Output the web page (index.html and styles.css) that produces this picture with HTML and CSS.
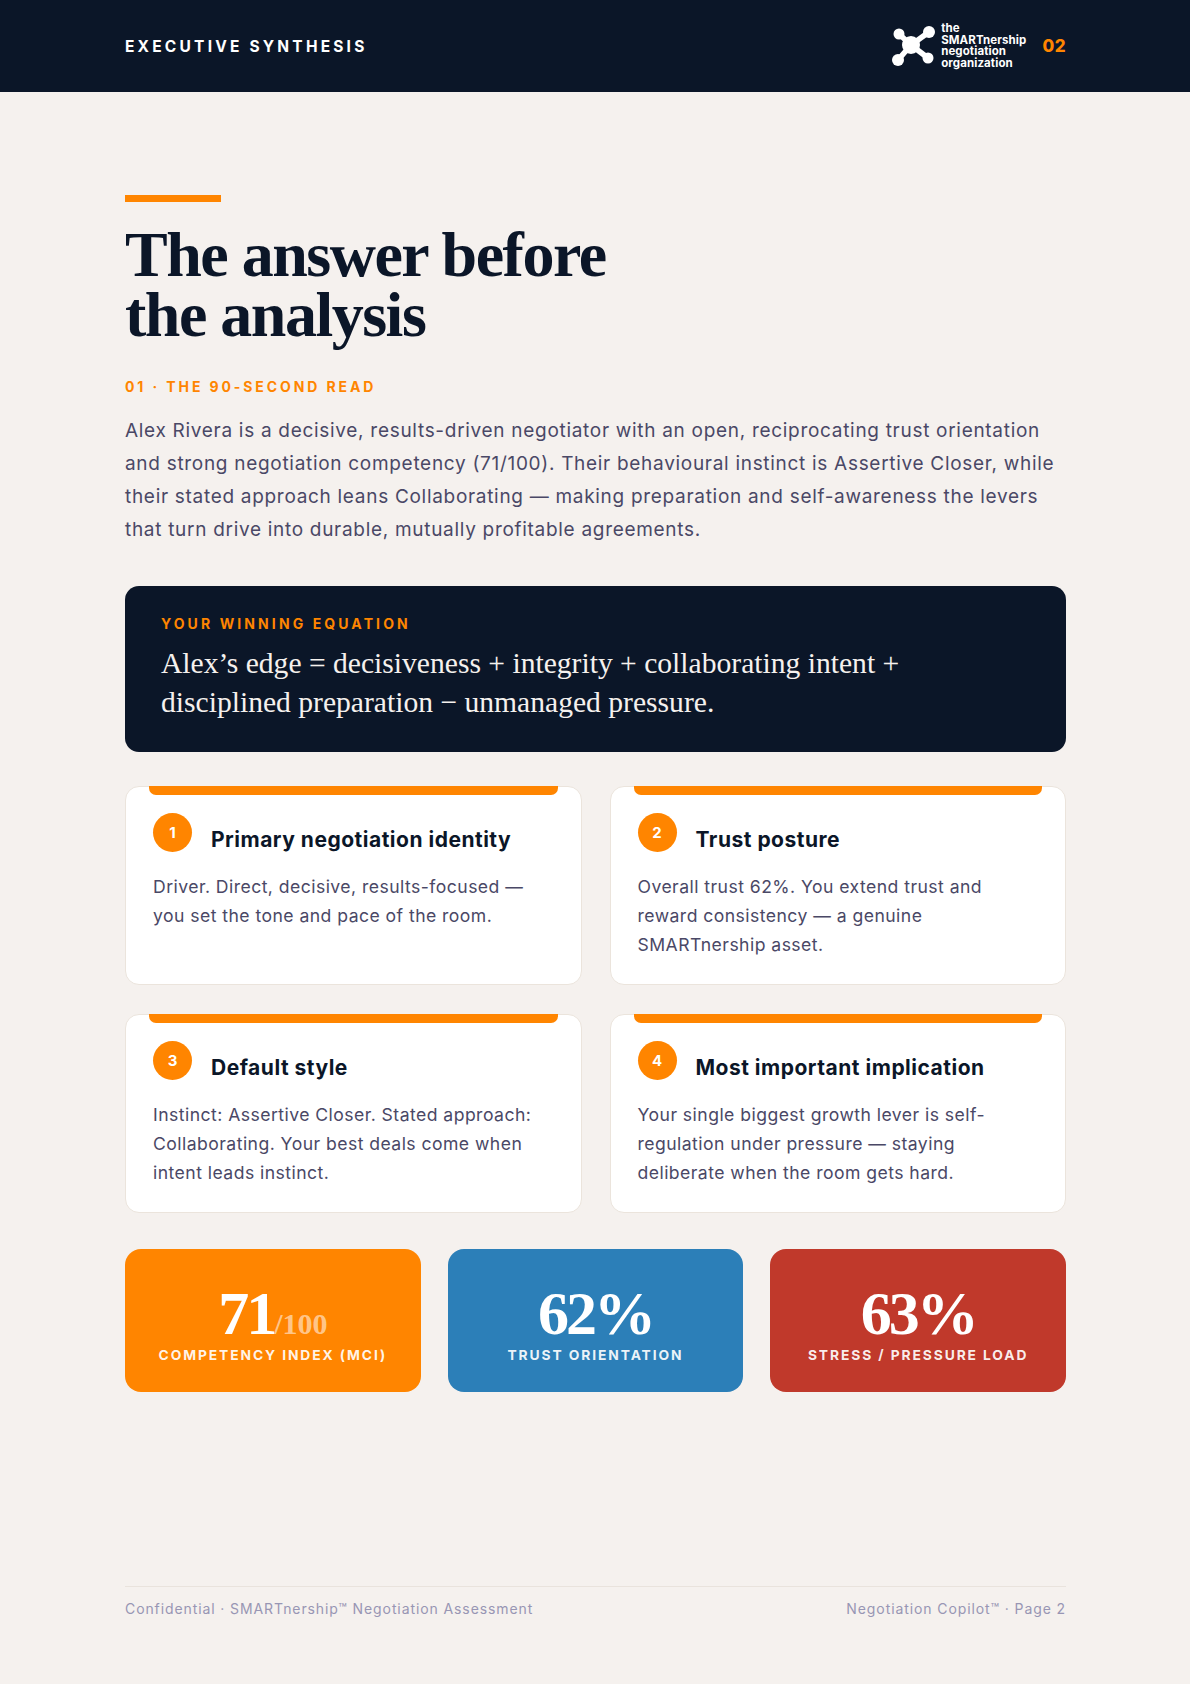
FILE: index.html
```html
<!DOCTYPE html>
<html lang="en">
<head>
<meta charset="utf-8">
<title>Executive Synthesis</title>
<link rel="stylesheet" href="styles.css">
</head>
<body>
<header class="topbar">
  <div class="topbar-title">EXECUTIVE SYNTHESIS</div>
  <div class="topbar-right">
    <div class="logo">
      <svg class="logo-mark" width="46" height="42" viewBox="0 0 46 42" aria-hidden="true">
        <g stroke="#fff" stroke-width="5.5" stroke-linecap="round">
          <line x1="19" y1="20" x2="7" y2="9"/>
          <line x1="19" y1="20" x2="37" y2="7"/>
          <line x1="19" y1="20" x2="6" y2="35"/>
          <line x1="19" y1="20" x2="36" y2="33"/>
        </g>
        <g fill="#fff">
          <circle cx="19" cy="20" r="9"/>
          <circle cx="7" cy="9" r="5.5"/>
          <circle cx="37" cy="7" r="6"/>
          <circle cx="6" cy="35" r="6"/>
          <circle cx="36" cy="33" r="5.5"/>
        </g>
      </svg>
      <div class="logo-text">the<br>SMARTnership<br>negotiation<br>organization</div>
    </div>
    <span class="page-num">02</span>
  </div>
</header>

<main class="page">
  <div class="rule"></div>
  <h1 class="headline"><span class="headline-line">The answer before</span><span class="headline-line">the analysis</span></h1>
  <div class="kicker">01 · THE 90-SECOND READ</div>
  <p class="lead">Alex Rivera is a decisive, results-driven negotiator with an open, reciprocating trust orientation and strong negotiation competency (71/100). Their behavioural instinct is Assertive Closer, while their stated approach leans Collaborating — making preparation and self-awareness the levers that turn drive into durable, mutually profitable agreements.</p>

  <section class="equation">
    <div class="equation-label">YOUR WINNING EQUATION</div>
    <div class="equation-text">Alex’s edge = decisiveness + integrity + collaborating intent +<br>disciplined preparation − unmanaged pressure.</div>
  </section>

  <section class="cards">
    <article class="card">
      <div class="card-bar"></div>
      <div class="card-body">
        <div class="card-head"><span class="num">1</span><h3>Primary negotiation identity</h3></div>
        <p>Driver. Direct, decisive, results-focused — you set the tone and pace of the room.</p>
      </div>
    </article>
    <article class="card">
      <div class="card-bar"></div>
      <div class="card-body">
        <div class="card-head"><span class="num">2</span><h3>Trust posture</h3></div>
        <p>Overall trust 62%. You extend trust and reward consistency — a genuine SMARTnership asset.</p>
      </div>
    </article>
    <article class="card">
      <div class="card-bar"></div>
      <div class="card-body">
        <div class="card-head"><span class="num">3</span><h3>Default style</h3></div>
        <p>Instinct: Assertive Closer. Stated approach: Collaborating. Your best deals come when intent leads instinct.</p>
      </div>
    </article>
    <article class="card">
      <div class="card-bar"></div>
      <div class="card-body">
        <div class="card-head"><span class="num">4</span><h3>Most important implication</h3></div>
        <p>Your single biggest growth lever is self-regulation under pressure — staying deliberate when the room gets hard.</p>
      </div>
    </article>
  </section>

  <section class="stats">
    <div class="stat stat-orange">
      <div class="stat-value">71<span class="stat-sub">/100</span></div>
      <div class="stat-label">COMPETENCY INDEX (MCI)</div>
    </div>
    <div class="stat stat-blue">
      <div class="stat-value">62%</div>
      <div class="stat-label">TRUST ORIENTATION</div>
    </div>
    <div class="stat stat-red">
      <div class="stat-value">63%</div>
      <div class="stat-label">STRESS / PRESSURE LOAD</div>
    </div>
  </section>
</main>

<footer class="footer">
  <span>Confidential · SMARTnership™ Negotiation Assessment</span>
  <span>Negotiation Copilot™ · Page 2</span>
</footer>
</body>
</html>
```

FILE: styles.css
```css
* { box-sizing: border-box; }

html, body {
  margin: 0;
  padding: 0;
}

body {
  width: 1190px;
  min-height: 1684px;
  background: #f5f1ee;
  font-family: Inter, "Noto Sans", sans-serif;
  color: #0b1628;
  display: flex;
  flex-direction: column;
}

/* Top bar */
.topbar {
  height: 92px;
  background: #0b1628;
  display: flex;
  align-items: center;
  justify-content: space-between;
  padding: 0 124px 0 125px;
}

.topbar-title {
  color: #ffffff;
  font-weight: 700;
  font-size: 15.5px;
  letter-spacing: 3.2px;
}

.topbar-right {
  display: flex;
  align-items: center;
  gap: 16px;
}

.logo {
  display: flex;
  align-items: center;
  gap: 3px;
}

.logo-mark { display: block; }

.logo-text {
  color: #ffffff;
  font-weight: 700;
  font-size: 11.5px;
  line-height: 11.5px;
  letter-spacing: 0.1px;
}

.page-num {
  color: #ff8500;
  font-weight: 800;
  font-size: 17px;
  letter-spacing: 0.5px;
}

/* Main */
.page {
  padding: 103px 124px 0 125px;
  display: flex;
  flex-direction: column;
}

.rule {
  width: 96px;
  height: 7px;
  background: #ff8500;
}

.headline {
  margin: 23px 0 0;
  font-family: "Liberation Serif", "Times New Roman", serif;
  font-weight: 700;
  font-size: 64px;
  line-height: 60px;
  letter-spacing: -1.5px;
  color: #0b1628;
}

.headline-line {
  display: block;
  height: 60px;
}

.kicker {
  margin-top: 33px;
  color: #ff8500;
  font-weight: 700;
  font-size: 14px;
  letter-spacing: 2.9px;
}

.lead {
  margin: 20px 0 0;
  font-size: 19px;
  line-height: 32.9px;
  letter-spacing: 0.7px;
  color: #4a4866;
}

/* Equation */
.equation {
  margin-top: 39px;
  background: #0b1628;
  border-radius: 14px;
  padding: 29px 36px 30px;
}

.equation-label {
  color: #ff8500;
  font-weight: 700;
  font-size: 14px;
  line-height: 17px;
  letter-spacing: 3.1px;
}

.equation-text {
  margin-top: 12px;
  font-family: "Liberation Serif", "Times New Roman", serif;
  font-size: 29.6px;
  line-height: 39px;
  color: #f5f1ee;
}

/* Cards */
.cards {
  margin-top: 34px;
  display: grid;
  grid-template-columns: 1fr 1fr;
  column-gap: 28px;
  row-gap: 29px;
}

.card {
  background: #ffffff;
  border: 1px solid #ebe4dc;
  border-radius: 14px;
  min-height: 199px;
}

.card-bar {
  height: 9px;
  margin: -1px 23px 0;
  background: #ff8500;
  border-radius: 0 0 7px 7px;
}

.card-body {
  padding: 18px 27px 24px;
}

.card-head {
  display: flex;
  align-items: flex-start;
  gap: 19px;
}

.num {
  flex: none;
  width: 39px;
  height: 39px;
  border-radius: 50%;
  background: #ff8500;
  color: #ffffff;
  font-weight: 700;
  font-size: 15px;
  display: flex;
  align-items: center;
  justify-content: center;
}

.card-head h3 {
  margin: 13px 0 0;
  font-size: 21px;
  line-height: 28px;
  font-weight: 700;
  letter-spacing: 0.5px;
  color: #0b1628;
}

.card-body p {
  margin: 18px 0 0;
  font-size: 17.6px;
  line-height: 29px;
  letter-spacing: 0.45px;
  color: #4a4866;
}

/* Stats */
.stats {
  margin-top: 36px;
  display: grid;
  grid-template-columns: repeat(3, 1fr);
  gap: 27px;
}

.stat {
  height: 143px;
  border-radius: 16px;
  color: #ffffff;
  display: flex;
  flex-direction: column;
  align-items: center;
  justify-content: center;
  padding-top: 7px;
}

.stat-orange { background: #ff8500; }
.stat-blue { background: #2c7fb8; }
.stat-red { background: #c0392b; }

.stat-value {
  font-family: "Liberation Serif", "Times New Roman", serif;
  font-weight: 700;
  font-size: 62px;
  line-height: 56px;
  letter-spacing: -3px;
}

.stat-sub {
  font-size: 30px;
  line-height: 1;
  font-weight: 700;
  color: rgba(255, 255, 255, 0.55);
  letter-spacing: 0;
}

.stat-label {
  margin-top: 6px;
  font-weight: 700;
  font-size: 13.8px;
  letter-spacing: 1.9px;
  color: rgba(255, 255, 255, 0.92);
}

/* Footer */
.footer {
  margin: auto 124px 0 125px;
  border-top: 1px solid #e9e3dd;
  padding: 13px 0 66px;
  display: flex;
  justify-content: space-between;
  font-size: 14px;
  line-height: 18px;
  letter-spacing: 0.9px;
  color: #9896b4;
}
```
